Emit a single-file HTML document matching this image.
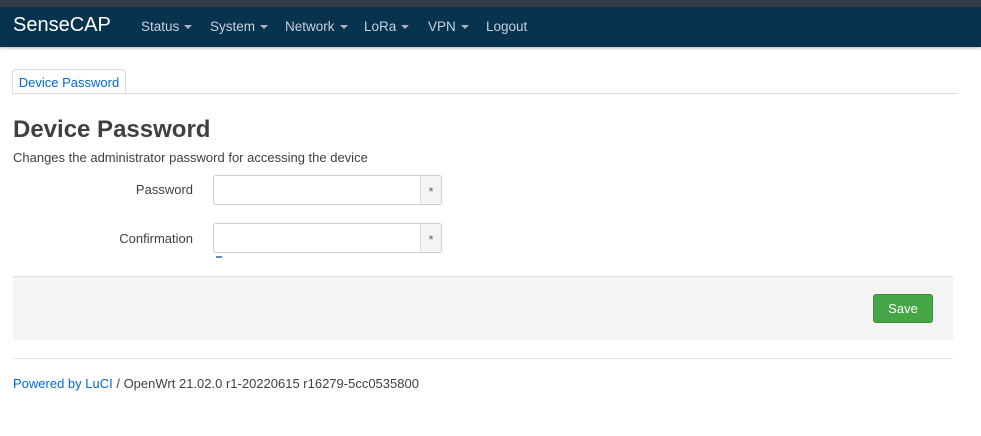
<!DOCTYPE html>
<html><head><style>
body{margin:0;width:981px;height:436px;background:#fff;font-family:"Liberation Sans",sans-serif;font-size:13px;color:#404040;position:relative;overflow:hidden}
.top{position:absolute;left:0;top:0;width:981px;height:7px;background:#333c4a}
.nav{position:absolute;left:0;top:7px;width:981px;height:40px;background:#07334f;box-shadow:0 1px 3px rgba(0,0,0,.3)}
.brand{position:absolute;left:13px;top:7px;font-size:20px;color:#fff}
.menu{position:absolute;top:12px;font-size:13.5px;color:#c8d0d8}
.car{display:inline-block;border-left:4px solid transparent;border-right:4px solid transparent;border-top:4px solid #aab4be;vertical-align:middle;margin-left:5px}
.tab{position:absolute;left:12px;top:69px;width:112px;height:24px;border:1px solid #ddd;border-bottom:1px solid #fff;border-radius:4px 4px 0 0;background:#fff;color:#0069d6;font-size:13px;line-height:25px;text-align:center}
.tabline{position:absolute;left:12px;top:93px;width:946px;height:1px;background:#ddd}
h2{position:absolute;left:13px;top:116px;margin:0;font-size:24px;font-weight:bold;color:#404040}
.desc{position:absolute;left:13px;top:150px;font-size:13px;color:#404040}
.lab{position:absolute;width:180px;left:13px;text-align:right;font-size:13px}
.inp{position:absolute;left:213px;width:206px;height:28px;border:1px solid #ccc;border-radius:3px 0 0 3px;background:#fff}
.add{position:absolute;left:420px;width:20px;height:28px;border:1px solid #ccc;border-left:1px solid #ddd;border-radius:0 3px 3px 0;background:#f4f4f4;text-align:center;line-height:32px;font-size:13px;color:#666}
.panel{position:absolute;left:13px;top:276px;width:940px;height:63px;background:#f4f4f4;border-top:1px solid #ddd}
.save{position:absolute;left:873px;top:294px;width:58px;height:27px;background:#46a546;border:1px solid #3b8e3b;border-radius:3px;color:#fff;font-size:13px;text-align:center;line-height:27px}
.hr{position:absolute;left:13px;top:358px;width:940px;height:1px;background:#e5e5e5}
.foot{position:absolute;left:13px;top:376px;font-size:13px;color:#404040}
.foot a{color:#0069d6;text-decoration:none}
</style></head><body>
<div class="top"></div>
<div class="nav">
<div class="brand">SenseCAP</div>
<div class="menu" style="left:141px">Status<span class="car"></span></div>
<div class="menu" style="left:210px">System<span class="car"></span></div>
<div class="menu" style="left:285px">Network<span class="car"></span></div>
<div class="menu" style="left:364px">LoRa<span class="car"></span></div>
<div class="menu" style="left:428px">VPN<span class="car"></span></div>
<div class="menu" style="left:486px">Logout</div>
</div>
<div class="tab">Device Password</div>
<div class="tabline"></div>
<h2>Device Password</h2>
<div class="desc">Changes the administrator password for accessing the device</div>
<div class="lab" style="top:182px">Password</div>
<div class="inp" style="top:175px"></div><div class="add" style="top:175px">*</div>
<div class="lab" style="top:231px">Confirmation</div>
<div class="inp" style="top:223px"></div><div class="add" style="top:223px">*</div>
<div style="position:absolute;left:216px;top:256px;width:6px;height:2px;background:#5b8fc7"></div>
<div class="panel"></div>
<div class="save">Save</div>
<div class="hr"></div>
<div class="foot"><a>Powered by LuCI</a> / OpenWrt 21.02.0 r1-20220615 r16279-5cc0535800</div>
</body></html>
